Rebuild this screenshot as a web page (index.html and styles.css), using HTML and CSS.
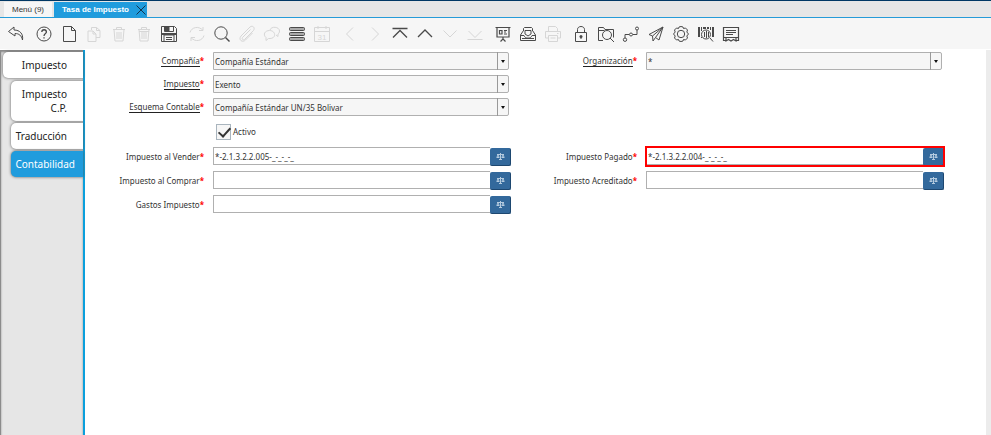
FILE: index.html
```html
<!DOCTYPE html>
<html lang="es">
  <head>
    <meta charset="UTF-8" />
    <meta name="viewport" content="width=device-width, initial-scale=1.0" />
    <title>Tasa de Impuesto</title>
    <link rel="stylesheet" href="styles.css">
  </head>
  <body>
    <svg class="defs" width="0" height="0">
      <symbol id="scale" viewBox="0 0 9 9">
        <path d="M4.500 1v7M3 7.500h3M1 2.500h7M.5 5.500h3M5.500 5.500h3M2 3L1 5M2 3l1 2M7 3L6 5M7 3l1 2" />
      </symbol>
    </svg>

    <nav class="window-tabs">
      <button class="window-tab" type="button">Menú (9)</button>
      <div class="window-tab active">
        <span>Tasa de Impuesto</span>
        <button class="close" type="button" aria-label="Cerrar">
          <svg viewBox="0 0 10 10"><path d="M.5.5l9 9M9.500.5l-9 9" /></svg>
        </button>
      </div>
    </nav>

    <div class="toolbar">
      <button type="button" aria-label="Deshacer"><svg viewBox="0 0 18 18"><path d="M7 2L1.500 6.500 8 11V8.500c4 0 6.500 2 7.500 6.500C16.500 9 13 5 7 5z" /></svg></button>

      <button class="first" type="button" aria-label="Ayuda"><svg viewBox="0 0 18 18"><circle cx="9" cy="9" r="7" /><path d="M6.800 7c0-3 4.600-3 4.600 0C11.400 8.500 9 8.500 9 11M9 12.300v1.200" stroke-width="1.300" /></svg></button>
      <button type="button" aria-label="Nuevo"><svg viewBox="0 0 18 18"><path d="M3.500 1.500h8l4 4v11h-12zM11.500 1.500v4h4" /></svg></button>
      <button type="button" aria-label="Copiar" disabled><svg viewBox="0 0 18 18"><path d="M6.500 5V2.500h5l3.500 3v7h-4M11.500 2.500v3H15M3 6h5l3 3v7.500H3zM8 6v3h3" /></svg></button>
      <button type="button" aria-label="Eliminar" disabled><svg viewBox="0 0 18 18"><path d="M3 4.500h12M6.500 4.500v-2h5v2M4 4.500l1 11.500h8l1-11.500M7 7v7M9 7v7M11 7v7" /></svg></button>
      <button type="button" aria-label="Eliminar selección" disabled><svg viewBox="0 0 18 18"><path d="M3 4.500h12M6.500 4.500v-2h5v2M4 4.500l1 11.500h8l1-11.500M7 7v7M9 7v7M11 7v7M4 6.500h10" /></svg></button>
      <button type="button" aria-label="Guardar"><svg viewBox="0 0 18 18"><path d="M1.500 1.500h13l2 2v13h-15zM4.500 1.500v5h9v-5M4 16v-6h10v6M6 12.500h6M6 14.500h6" /><path class="fill" d="M4.500 2h5v4h-5zM2 8h14v2H2z" /></svg></button>

      <button class="first" type="button" aria-label="Refrescar" disabled><svg viewBox="0 0 18 18"><path d="M2 7.500C3.500 2 11 .5 15 5.500V2M15 5.500h-4M16 10.500c-1.500 5.500-9 7-13 2V16M3 12.500h4" /></svg></button>
      <button type="button" aria-label="Buscar"><svg viewBox="0 0 18 18"><circle cx="8" cy="8" r="6.200" /><path d="M12.500 12.500l4 4" stroke-width="1.400" /></svg></button>
      <button type="button" aria-label="Adjunto" disabled><svg viewBox="0 0 18 18"><path d="M12.500 4.500l-8 8c-1 1.500.5 3 2 2l9-9c2-3-1-5.500-3.500-3.500l-9 9c-3 4 1.500 7 4.500 4l7-7" /></svg></button>
      <button type="button" aria-label="Chat" disabled><svg viewBox="0 0 18 18"><path d="M7 5c1-4 9.500-3.500 9.500 1 0 1.500-.7 2.500-1.500 3v2.500L13 10M6.500 5.500c6.500 0 7 8 .5 8H5.500L3 15.500V12.500C-.5 9.500 2 5.500 6.500 5.500z" /></svg></button>
      <button type="button" aria-label="Conmutar cuadrícula"><svg class="rows" viewBox="0 0 18 18"><rect x="1.500" y="2.500" width="15" height="3" rx="1" /><rect x="1.500" y="7.500" width="15" height="3" rx="1" /><rect x="1.500" y="12.500" width="15" height="3" rx="1" /></svg></button>
      <button type="button" aria-label="Histórico" disabled><svg viewBox="0 0 18 18"><path d="M1.500 2.500h15v14h-15zM1.500 6.500h15M5 1v3M13 1v3" /><text x="9" y="14.500">31</text></svg></button>

      <button class="first" type="button" aria-label="Anterior" disabled><svg viewBox="0 0 18 18"><path d="M12 2.500L5.500 9l6.500 6.500" /></svg></button>
      <button type="button" aria-label="Siguiente" disabled><svg viewBox="0 0 18 18"><path d="M6 2.500L12.500 9 6 15.500" /></svg></button>
      <button type="button" aria-label="Primer registro"><svg viewBox="0 0 18 18"><path d="M1.500 3.500h15M2 12.500L9 5.500l7 7" stroke-width="1.300" /></svg></button>
      <button type="button" aria-label="Registro anterior"><svg viewBox="0 0 18 18"><path d="M2 12l7-7 7 7" stroke-width="1.300" /></svg></button>
      <button type="button" aria-label="Registro siguiente" disabled><svg viewBox="0 0 18 18"><path d="M2.500 5.500L9 12l6.500-6.500" /></svg></button>
      <button type="button" aria-label="Último registro" disabled><svg viewBox="0 0 18 18"><path d="M2.500 6L9 12.500 15.500 6M1.500 14.500h15" /></svg></button>

      <button class="first" type="button" aria-label="Informe"><svg viewBox="0 0 18 18"><path d="M1.500 2.500h15M3 2.500v9.500h12V2.500M9 12v2l-2.500 2.500M9 14l2.500 2.500M5.500 5.500h2.500v3.500H5.500zM10 5.500h3M10 7h2M10 9h3" stroke-width="1.200" /></svg></button>
      <button type="button" aria-label="Archivo"><svg viewBox="0 0 18 18"><path d="M4.500 6V3.500l1-1h7l1 1V6M4.500 5.500L1.500 10v5.500h15V10l-3-4.500M1.500 10.500H5c1 3.500 7 3.500 8 0h3.500M3 13.500h12M6 5.500h6v3.500L9 11 6 9z" /></svg></button>
      <button type="button" aria-label="Imprimir" disabled><svg viewBox="0 0 18 18"><path d="M4.500 6.500v-5h7l2 2v3M4 13H1.500V6.500h15V13H14M4.500 10.500h9v6h-9zM13 8.500h1.500M6.500 13h5" /></svg></button>

      <button class="first" type="button" aria-label="Bloquear"><svg viewBox="0 0 18 18"><path d="M3.500 7.500h11v9h-11zM5.500 7.500V4.500c0-4 7-4 7 0v3M9 12v2" /><circle class="fill" cx="9" cy="11.500" r="1.500" /></svg></button>
      <button type="button" aria-label="Zoom"><svg viewBox="0 0 18 18"><path d="M6 15.500H1.500v-13h5l1.500 2h8.500v8M1.500 5.500h6M13 13l4 4" /><circle cx="10" cy="10" r="4.500" /></svg></button>
      <button type="button" aria-label="Flujo de trabajo"><svg viewBox="0 0 18 18"><path d="M3 13V9.500h4M11 9.500h4V5" /><circle cx="3" cy="14.700" r="1.700" /><circle cx="9" cy="9.500" r="1.500" /><circle cx="15" cy="3.500" r="1.500" /></svg></button>
      <button type="button" aria-label="Solicitudes"><svg viewBox="0 0 18 18"><path d="M16 2L2 9.500l3.500 1.500L6 16l2.500-3.500L12 15zM16 2L5.500 11M16 2L8.500 12.500" /></svg></button>
      <button type="button" aria-label="Proceso"><svg viewBox="0 0 18 18"><path d="M7 2l2-.5L11 2l.5 1.500 2-.5 2 2-.7 2 1.700 2-1.700 2 .7 2-2 2-2-.5L11 16l-2 .5L7 16l-.5-1.500-2 .5-2-2 .7-2L1.500 9l1.700-2-.7-2 2-2 2 .5z" /><circle cx="9" cy="9" r="3.700" /></svg></button>
      <button type="button" aria-label="Información de producto"><svg viewBox="0 0 18 18"><path class="fill" d="M1 2h2v10H1zM4 2h1v4H4zM6 2h3v2H6zM10 2h2v2h-2zM13 2h1v3h-1zM15 2h2v10h-2z" /><path d="M13 13l3 3.500M7.500 7v5M9.500 6v7M11.500 7v5M4.500 12v1" /><circle cx="9" cy="9.500" r="4.500" /></svg></button>
      <button type="button" aria-label="Notas"><svg viewBox="0 0 18 18"><path d="M4 15.500H1.500v-13h15v13H14M1.500 12.500h15M4 12.500V16l2.500-1.500L9 16l2.500-1.500L14 16v-3.500M4 5.500h10M4 7.500h10M4 9.500h7" stroke-width="1.200" /></svg></button>
    </div>

    <div class="content">
      <aside class="side-tabs">
        <button class="main" type="button">Impuesto</button>
        <button type="button">Impuesto<br>C.P.</button>
        <button type="button">Traducción</button>
        <button class="selected" type="button">Contabilidad</button>
      </aside>

      <form>
        <label class="link" for="client"><span>Compañía</span></label>
        <div class="combo">
          <select id="client"><option>Compañía Estándar</option></select>
        </div>
        <label class="link" for="org"><span>Organización</span></label>
        <div class="combo">
          <select id="org"><option>*</option></select>
        </div>

        <label class="link start" for="tax"><span>Impuesto</span></label>
        <div class="combo">
          <select id="tax"><option>Exento</option></select>
        </div>

        <label class="link start" for="schema"><span>Esquema Contable</span></label>
        <div class="combo">
          <select id="schema"><option>Compañía Estándar UN/35 Bolivar</option></select>
        </div>

        <div class="check">
          <input type="checkbox" id="active" checked />
          <label for="active">Activo</label>
        </div>

        <label class="start" for="taxDue"><span>Impuesto al Vender</span></label>
        <div class="account">
          <input type="text" id="taxDue" value="*-2.1.3.2.2.005-_-_-_-_" />
          <button type="button" aria-label="Cuenta"><svg><use href="#scale" /></svg></button>
        </div>
        <label for="taxLiability"><span>Impuesto Pagado</span></label>
        <div class="account highlight">
          <input type="text" id="taxLiability" value="*-2.1.3.2.2.004-_-_-_-_" />
          <button type="button" aria-label="Cuenta"><svg><use href="#scale" /></svg></button>
        </div>

        <label class="start" for="taxCredit"><span>Impuesto al Comprar</span></label>
        <div class="account">
          <input type="text" id="taxCredit" />
          <button type="button" aria-label="Cuenta"><svg><use href="#scale" /></svg></button>
        </div>
        <label for="taxReceivables"><span>Impuesto Acreditado</span></label>
        <div class="account">
          <input type="text" id="taxReceivables" />
          <button type="button" aria-label="Cuenta"><svg><use href="#scale" /></svg></button>
        </div>

        <label class="start" for="taxExpense"><span>Gastos Impuesto</span></label>
        <div class="account">
          <input type="text" id="taxExpense" />
          <button type="button" aria-label="Cuenta"><svg><use href="#scale" /></svg></button>
        </div>
      </form>
    </div>
  </body>
</html>
```
FILE: styles.css
```css
* {
  box-sizing: border-box;
}
body {
  font-family: "Noto Sans", "Open Sans", sans-serif;
  font-size: 8px;
  color: #333;
  background-color: white;
  margin: 0;
  min-height: 100vh;
  display: flex;
  flex-direction: column;
}
button,
input,
select {
  font-family: inherit;
  font-size: inherit;
  color: inherit;
  margin: 0;
  padding: 0;
  border: none;
  background: none;
}
svg {
  fill: none;
  stroke: currentColor;
}
.defs {
  position: absolute;
}

/* Window tabs */
.window-tabs {
  display: flex;
  gap: 2px;
  height: 18px;
  padding: 1px 4px 0;
  background-color: #e6e6e6;
  border-top: 1px solid #003764;
  border-bottom: 1px solid #259bd8;
}
.window-tab {
  display: flex;
  align-items: center;
  padding: 0 8px;
  background-color: #f6f6f6;
  font-family: "Liberation Sans", Arial, sans-serif;
  font-size: 8px;
}
.window-tab.active {
  background-color: #209cdd;
  color: white;
  font-weight: bold;
  padding-right: 0;
  gap: 7px;
}
.close {
  color: #12344d;
  width: 11px;
  height: 10px;
}
.close svg {
  display: block;
  width: 10px;
  height: 10px;
}

/* Toolbar */
.toolbar {
  display: flex;
  align-items: center;
  height: 31px;
  padding-left: 3px;
  background-color: #f6f6f6;
}
.toolbar button {
  width: 25px;
  height: 24px;
  display: flex;
  align-items: center;
  justify-content: center;
  color: #4a4a4a;
}
.toolbar button.first {
  margin-left: 3px;
}
.toolbar button:disabled {
  color: #d6d6d6;
}
.toolbar svg {
  width: 18px;
  height: 18px;
}
.toolbar .fill {
  fill: currentColor;
  stroke: none;
}
.toolbar .rows rect {
  fill: #aaa;
}
.toolbar text {
  font: 8px "Liberation Sans", Arial, sans-serif;
  fill: currentColor;
  stroke: none;
  text-anchor: middle;
}

/* Side tabs */
.content {
  flex: 1;
  display: flex;
  border-top: 1px solid white;
}
.side-tabs {
  width: 85px;
  display: flex;
  flex-direction: column;
  align-items: flex-end;
  gap: 2px;
  padding: 2px 0 0 1px;
  background-color: #e6e6e6;
  border-left: 1px solid #8c8c8c;
  border-right: 2px solid #0a9fdc;
  box-shadow: inset 0 2px 2px #888;
}
.side-tabs button {
  width: 72px;
  padding: 6px 16px 6px 4px;
  background-color: white;
  color: #222;
  font-size: 10px;
  line-height: 14px;
  text-align: right;
  white-space: nowrap;
  border-radius: 5px 0 0 5px;
  box-shadow: 0 0 3px #555;
}
.side-tabs button.main {
  width: 80px;
  margin-bottom: 1px;
}
.side-tabs button.selected {
  background-color: #209cdd;
  color: white;
  padding-right: 8px;
}

/* Form */
form {
  flex: 1;
  display: grid;
  grid-template-columns: 119px 1fr 117px 1fr;
  align-content: start;
  gap: 5px 9px;
  padding: 2px 42px 0 0;
  border-right: 5px solid #ececec;
}
form > label {
  line-height: 19px;
  text-align: right;
}
form > label.link {
  line-height: 18px;
}
form > label.start {
  grid-column: 1;
}
form > label::after {
  content: "*";
  color: red;
  font-weight: bold;
}
.link span {
  border-bottom: 1px solid #222;
}
.combo {
  position: relative;
  height: 18px;
  margin-right: 2px;
}
.combo select {
  appearance: none;
  display: block;
  width: 100%;
  height: 18px;
  padding: 0 20px 0 1px;
  background-color: #f6f6f6;
  border: 1px solid #b0b0b0;
  border-radius: 0 2px 2px 0;
}
.combo::before {
  content: "";
  position: absolute;
  top: 0;
  right: 11px;
  height: 18px;
  border-left: 1px solid #999;
}
.combo::after {
  content: "";
  position: absolute;
  top: 8px;
  right: 4px;
  border: 2px solid transparent;
  border-top: 3px solid #111;
  pointer-events: none;
}
.check {
  grid-column: 2;
  height: 21px;
  display: flex;
  align-items: center;
  gap: 2px;
  padding-left: 3px;
}
.check input {
  appearance: none;
  width: 15px;
  height: 16px;
  border: 1px solid #a9b5be;
  background-color: #f6f6f6;
  position: relative;
}
.check input:checked::after {
  content: "";
  position: absolute;
  left: 4px;
  top: 0;
  width: 5px;
  height: 10px;
  border: solid #333;
  border-width: 0 2px 2px 0;
  transform: rotate(42deg);
}
.account {
  display: flex;
  height: 19px;
}
.account input {
  flex: 1;
  min-width: 0;
  height: 18px;
  padding: 0 1px;
  background-color: white;
  border: 1px solid #b0b0b0;
  border-right: none;
}
.account button {
  width: 21px;
  height: 18px;
  margin-top: 1px;
  display: flex;
  align-items: center;
  justify-content: center;
  background-color: #33699c;
  color: #b4cbdf;
  border-right: 1px solid #1d4770;
  border-bottom: 1px solid #1d4770;
  border-radius: 2px;
}
.account svg {
  width: 9px;
  height: 9px;
}
.highlight {
  outline: 2px solid red;
  outline-offset: -1px;
}
```
